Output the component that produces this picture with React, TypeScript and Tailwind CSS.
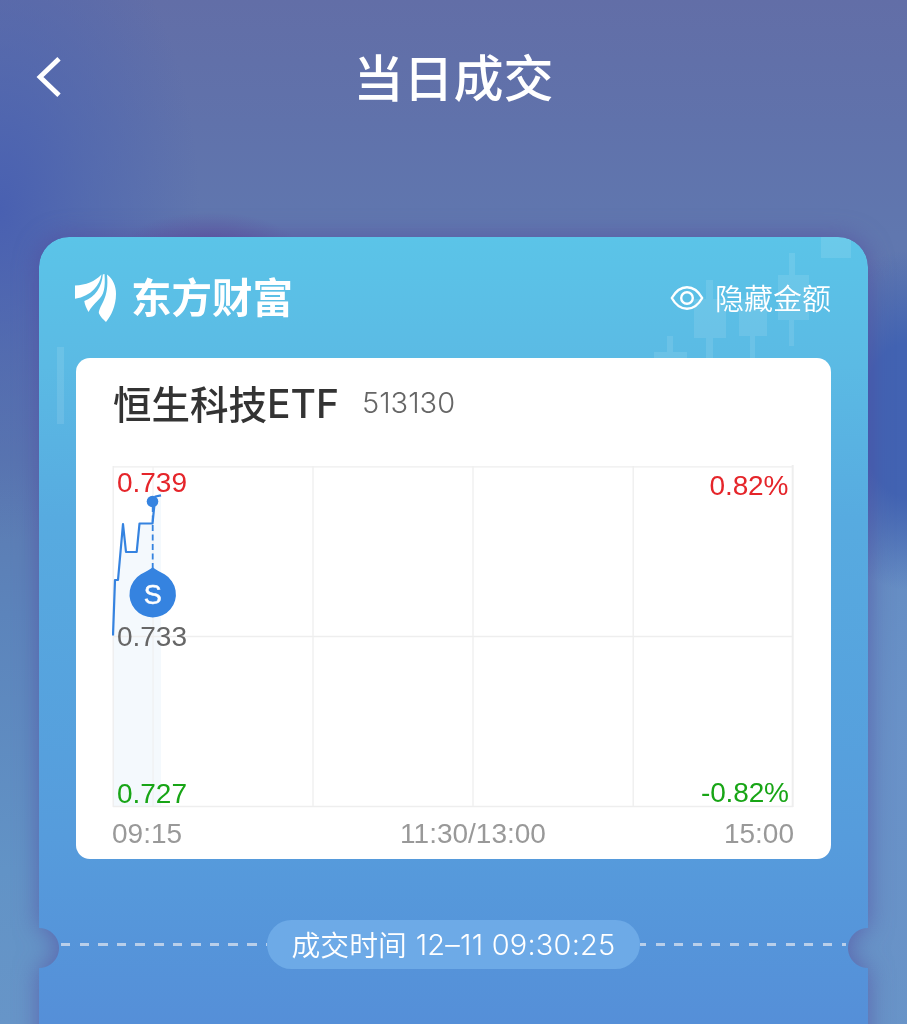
import { useState } from "react";

function BackIcon() {
  return (
    <svg width="26" height="40" viewBox="0 0 26 40" fill="none">
      <path d="M23 1.800L4 20L23 38.200" stroke="white" strokeWidth="4.800" />
    </svg>
  );
}

function EyeIcon() {
  return (
    <svg width="34" height="26" viewBox="0 0 34 26" fill="none" stroke="white" strokeWidth="2.400">
      <path d="M1.800 13C6 5.500 11 2.200 17 2.200S28 5.500 32.200 13C28 20.500 23 23.800 17 23.800S6 20.500 1.800 13Z" strokeLinejoin="round" />
      <circle cx="17" cy="13" r="5.800" />
    </svg>
  );
}

function BrandMark() {
  return (
    <svg width="42" height="50" viewBox="0 0 42 50" fill="white">
      <path d="M0 12.500C11 12 20 8.500 26.500 1.500C25 12 16.500 23 0 25.800Z" />
      <path d="M27.800 1.500L29.500 1C30.500 15 29 22 22.800 27.500C19 31 16 34.500 13.500 39C11.500 35.500 9.700 31.500 9.300 28C20 24 27 14 27.800 1.500Z" />
      <path d="M32 1.500C38 6 41 13 41 21C41 33 36 43 31 49C28.500 46.500 25 43.500 23.800 40C24.500 31.500 34.500 26 32 1.500Z" />
    </svg>
  );
}

// Faint candlesticks behind the card header
function CandlePattern() {
  return (
    <svg className="absolute top-0 left-0" width="829" height="200" viewBox="0 0 829 200" fill="white" fillOpacity="0.1">
      <path d="M18 110h7v77h-7z" />
      <path d="M628 99h6v16h14v8H615v-8h13z" />
      <path d="M667 43h7v19h13v39h-13v22h-7v-22h-12V62h12z" />
      <path d="M700 62h28v37h-12v24h-5V99h-11z" />
      <path d="M750 16h6v22h14v45h-15v26h-5V83h-11V38h11z" />
      <path d="M782 0h30v21h-30z" />
    </svg>
  );
}

function TrendChart() {
  return (
    <svg
      className="block"
      width="684"
      height="346"
      viewBox="112 464 684 346"
      fontFamily="Liberation Sans, Arial, sans-serif"
      fontSize="28"
    >
      <path
        d="M113 635L115 580H118L123 524L126 552H137L139.500 523.500H152.500L155 496L161 495V806H113Z"
        fill="#f4f9fd"
      />
      <g stroke="#eeeeee" strokeWidth="1.300">
        <path d="M113 466.800H793M113 636.500H793M113 806.500H793" />
        <path d="M113.200 466V807M313 466V807M473 466V807M633.200 466V807" />
        <path d="M792.700 465V807" strokeWidth="2" />
        <path d="M153 467V806" strokeWidth="1" />
      </g>
      <path
        d="M113 635.500L115 580H118L123 524L126 552H136.700L139.500 523.500H152.500L155.300 496.500L161 495.300"
        fill="none"
        stroke="#3583e0"
        strokeWidth="2.200"
        strokeLinejoin="round"
      />
      <path d="M152.700 506V570" stroke="#3583e0" strokeWidth="1.800" strokeDasharray="6 3.500" />
      <circle cx="152.500" cy="501.500" r="5.800" fill="#3583e0" />
      <path
        d="M152.700 567.300C155.500 569.800 160 571.800 164.500 574.300A23.200 23.200 0 1 1 140.900 574.300C145.400 571.800 149.900 569.800 152.700 567.300Z"
        fill="#3583e0"
      />
      <text x="152.700" y="604" fill="white" fontSize="27" textAnchor="middle" stroke="white" strokeWidth="0.500">S</text>
      <text x="117" y="492" fill="#e5252a" textLength="70">0.739</text>
      <text x="117" y="646" fill="#666666" textLength="70">0.733</text>
      <text x="117" y="803" fill="#18a516" textLength="70">0.727</text>
      <text x="709.500" y="495" fill="#e5252a" textLength="79">0.82%</text>
      <text x="701" y="802" fill="#18a516" textLength="88">-0.82%</text>
    </svg>
  );
}

export default function App() {
  const [hidden, setHidden] = useState(false);

  return (
    <div className="h-[1024px] w-[907px] overflow-hidden bg-[radial-gradient(ellipse_90px_38px_at_210px_250px,#5d559f_0%,transparent_100%),radial-gradient(ellipse_100px_170px_at_907px_420px,#4262b2_0%,#4263b2_45%,transparent_100%),radial-gradient(ellipse_90px_400px_at_907px_760px,#6a92c8_0%,#6a92c8aa_50%,transparent_100%),radial-gradient(ellipse_200px_330px_at_0px_210px,#4960b1_0%,#4b63b090_45%,transparent_100%),linear-gradient(180deg,#626ea7_0%,#6072ab_12%,#6077af_23%,#5c79b0_45%,#5c84bb_60%,#6293c6_85%,#6795c8_100%)] font-['Liberation_Sans','Noto_Sans_CJK_SC',sans-serif]">
      {/* Nav bar */}
      <header className="grid h-[154px] grid-cols-[1fr_auto_1fr] items-center px-[36px] text-white">
        <button className="w-[26px]" aria-label="返回">
          <BackIcon />
        </button>
        <h1 className="pb-[5px] text-[50px] leading-[60px] font-medium font-['Noto_Sans_CJK_SC',sans-serif]">当日成交</h1>
        <span />
      </header>

      {/* Ticket */}
      <main className="mt-[83px] ml-[39px] w-[829px] drop-shadow-[0_0_12px_rgba(83,69,155,0.6)]">
        <div className="relative h-[840px] rounded-t-[30px] bg-[linear-gradient(180deg,#5bc4e8_0px,#5bbae4_130px,#57abe0_280px,#569cdc_600px,#558fd8_787px)] mask-intersect [mask-image:radial-gradient(circle_at_0_711px,transparent_19.5px,#000_20.5px),radial-gradient(circle_at_829px_711px,transparent_19.5px,#000_20.5px)]">
          <CandlePattern />

          <div className="relative flex h-[121px] items-center justify-between pr-[37px] pl-[36px] text-white">
            <div className="flex items-center gap-[14px]">
              <BrandMark />
              <span className="pb-[3px] text-[40.5px] leading-[50px] font-bold font-['Noto_Sans_CJK_SC',sans-serif]">东方财富</span>
            </div>
            <button className="flex items-center gap-[11px]" onClick={() => setHidden(!hidden)}>
              <EyeIcon />
              <span className="pb-px text-[29px] leading-[36px] font-[350] font-['Noto_Sans_CJK_SC',sans-serif]">
                {hidden ? "显示金额" : "隐藏金额"}
              </span>
            </button>
          </div>

          <section className="relative ml-[37px] h-[501px] w-[755px] rounded-[14px] bg-white pl-[36px]">
            <div className="flex h-[106px] items-start pt-[20px]">
              <h2 className="flex w-[250px] pl-px text-[38.500px] leading-[48px] font-medium text-[#333333] font-['Noto_Sans_CJK_SC',sans-serif]">
                恒生科技
                <span className="font-['Inter',sans-serif] text-[39px] leading-[52px]">ETF</span>
              </h2>
              <span className="text-[29px] leading-[50px] font-light text-[#666666] font-['Inter',sans-serif]">513130</span>
            </div>
            <TrendChart />
            <div className="grid w-[682px] grid-cols-[1fr_auto_1fr] text-[28px] leading-[48px] text-[#999999]">
              <span>09:15</span>
              <span className="pl-[40px]">11:30/13:00</span>
              <span className="text-right">15:00</span>
            </div>
          </section>

          <div className="mt-[61px] flex items-center px-[22px]">
            <div className="h-[3px] flex-1 bg-[repeating-linear-gradient(90deg,#b9cfea_0_9.500px,transparent_9.500px_18.600px)]" />
            <div className="flex h-[49px] w-[373px] items-center justify-center gap-[9px] rounded-full bg-[#6daae7] text-white">
              <span className="pb-[2px] text-[28.800px] font-[350] font-['Noto_Sans_CJK_SC',sans-serif]">成交时间</span>
              <span className="text-[29px] font-light font-['Inter',sans-serif] tracking-[0.200px]">12–11 09:30:25</span>
            </div>
            <div className="h-[3px] flex-1 bg-[repeating-linear-gradient(90deg,#b9cfea_0_6px,transparent_6px_15.500px,#b9cfea_15.500px_18.600px)]" />
          </div>
        </div>
      </main>
    </div>
  );
}
